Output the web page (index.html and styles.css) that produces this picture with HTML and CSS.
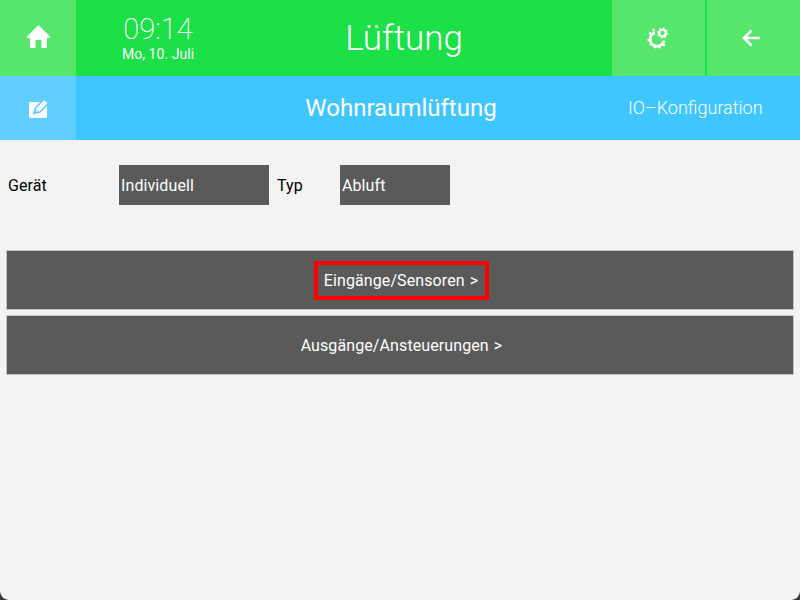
FILE: index.html
```html
<!DOCTYPE html>
<html lang="de">
<head>
    <meta charset="UTF-8">
    <title>Lüftung</title>
    <link rel="stylesheet" href="styles.css">
</head>
<body>
    <header class="top-bar">
        <a class="tile home-tile" href="#">
            <svg class="home-icon" width="23" height="23" viewBox="0 0 23 23"><path fill="#fff" d="M11.5 0 L23 11.5 L23 13 L20 13 L20 23 L14.5 23 L14.5 15 L8.5 15 L8.5 23 L3 23 L3 13 L0 13 L0 11.5 Z"/></svg>
        </a>
        <div class="clock">
            <div class="clock-time">09:14</div>
            <div class="clock-date">Mo, 10. Juli</div>
        </div>
        <h1 class="page-title">Lüftung</h1>
        <a class="tile action-tile" href="#">
            <svg class="gear-icon" width="22" height="22" viewBox="0 0 22 22">
                <path fill="none" stroke="#fff" stroke-width="3" d="M8 5.5 A7 7 0 1 0 17 13.5"/>
                <path fill="none" stroke="#fff" stroke-width="2.4" stroke-dasharray="2.2 2.6" d="M7.5 2.5 A9.2 9.2 0 0 0 2 9 M1.5 12 A9.5 9.5 0 0 0 10 20.5 A9.5 9.5 0 0 0 19 15"/>
                <circle cx="15.5" cy="6" r="3.4" fill="none" stroke="#fff" stroke-width="2.2"/>
                <circle cx="15.5" cy="6" r="5" fill="none" stroke="#fff" stroke-width="1.4" stroke-dasharray="1.6 2.3"/>
            </svg>
        </a>
        <a class="tile action-tile" href="#">
            <svg class="back-icon" width="18" height="18" viewBox="0 0 18 18"><path fill="none" stroke="#fff" stroke-width="2.6" d="M9.5 1.5 L2 9 L9.5 16.5 M2 9 L18 9"/></svg>
        </a>
    </header>

    <div class="sub-bar">
        <a class="tile edit-tile" href="#">
            <svg width="20" height="20" viewBox="0 0 20 20">
                <rect x="0" y="4" width="18" height="16" rx="1" fill="#fff"/>
                <path fill="#fff" stroke="#60ceff" stroke-width="1.6" d="M5 15.5 L6.5 10 L15 1 L19.5 5 L11 14 Z"/>
                <path fill="#60ceff" d="M4.5 16 L6 10.5 L10.5 14.5 Z"/>
                <path fill="#fff" d="M6.8 13.8 L7.4 11.8 L9 13.2 Z"/>
            </svg>
        </a>
        <h2 class="sub-title">Wohnraumlüftung</h2>
        <a class="sub-link" href="#">IO–Konfiguration</a>
    </div>

    <main class="content">
        <div class="device-row">
            <span class="device-label">Gerät</span>
            <div class="field field-device">Individuell</div>
            <span class="type-label">Typ</span>
            <div class="field field-type">Abluft</div>
        </div>

        <div class="nav-buttons">
            <a class="nav-button" href="#"><span class="highlight">Eingänge/Sensoren &gt;</span></a>
            <a class="nav-button" href="#">Ausgänge/Ansteuerungen &gt;</a>
        </div>
    </main>
</body>
</html>
```

FILE: styles.css
```css
html {
    background-color: #3a3a3a;
}
body {
    margin: 0;
    height: 600px;
    overflow: hidden;
    background-color: #f3f3f3;
    border-radius: 0 0 9px 9px;
    font-family: Roboto, "Liberation Sans", sans-serif;
    color: #000000;
}
a {
    color: inherit;
    text-decoration: none;
}
.tile {
    display: flex;
    align-items: center;
    justify-content: center;
    flex-shrink: 0;
}

/* top bar */
.top-bar {
    display: flex;
    height: 76px;
    background-color: #1ce048;
    color: #ffffff;
}
.home-tile {
    width: 76px;
    background-color: #56e66c;
}
.home-icon {
    margin: 0 0 3px 1px;
}
.clock {
    width: 164px;
    padding-top: 13px;
    text-align: center;
}
.clock-time {
    font-size: 29px;
    font-weight: 200;
    line-height: 33px;
}
.clock-date {
    font-size: 14px;
    line-height: 17px;
    letter-spacing: 0.05px;
}
.page-title {
    flex: 1;
    margin: 0;
    padding-right: 44px;
    font-size: 35px;
    font-weight: 300;
    line-height: 78px;
    text-align: center;
}
.action-tile {
    width: 93px;
    background-color: #56e66c;
}
.action-tile + .action-tile {
    margin-left: 2px;
}
.gear-icon {
    margin-right: 1px;
}
.back-icon {
    margin-right: 5px;
}

/* second bar */
.sub-bar {
    display: flex;
    align-items: center;
    height: 64px;
    background-color: #40c6ff;
    color: #ffffff;
}
.edit-tile {
    width: 76px;
    height: 100%;
    padding-left: 2px;
    box-sizing: border-box;
    background-color: #60ceff;
}
.sub-title {
    flex: 1;
    margin: 0;
    padding-left: 98px;
    font-size: 24px;
    font-weight: 400;
    text-align: center;
}
.sub-link {
    width: 172px;
    margin-bottom: 2px;
    padding-right: 38px;
    box-sizing: border-box;
    font-size: 18px;
    font-weight: 300;
    text-align: right;
    white-space: nowrap;
}

/* content */
.content {
    padding: 25px 6px 0;
}
.device-row {
    display: flex;
    align-items: center;
    height: 40px;
    font-size: 16px;
    letter-spacing: 0.1px;
}
.device-label {
    width: 113px;
    padding-left: 2px;
    box-sizing: border-box;
}
.type-label {
    width: 63px;
    margin-left: 8px;
}
.field {
    height: 40px;
    padding-left: 2px;
    box-sizing: border-box;
    background-color: #5a5a5a;
    color: #ffffff;
    line-height: 41px;
}
.field-device {
    width: 150px;
}
.field-type {
    width: 110px;
}
.nav-buttons {
    display: flex;
    flex-direction: column;
    gap: 5px;
    margin-top: 45px;
}
.nav-button {
    display: flex;
    align-items: center;
    justify-content: center;
    height: 60px;
    padding-left: 3px;
    box-sizing: border-box;
    border: 1px solid #c4c4c4;
    background-color: #5a5a5a;
    color: #ffffff;
    font-size: 16px;
    letter-spacing: 0.1px;
    word-spacing: 1px;
}
.highlight {
    padding: 6px 7px 6px 6px;
    border: 4px solid #ff0000;
}
```
